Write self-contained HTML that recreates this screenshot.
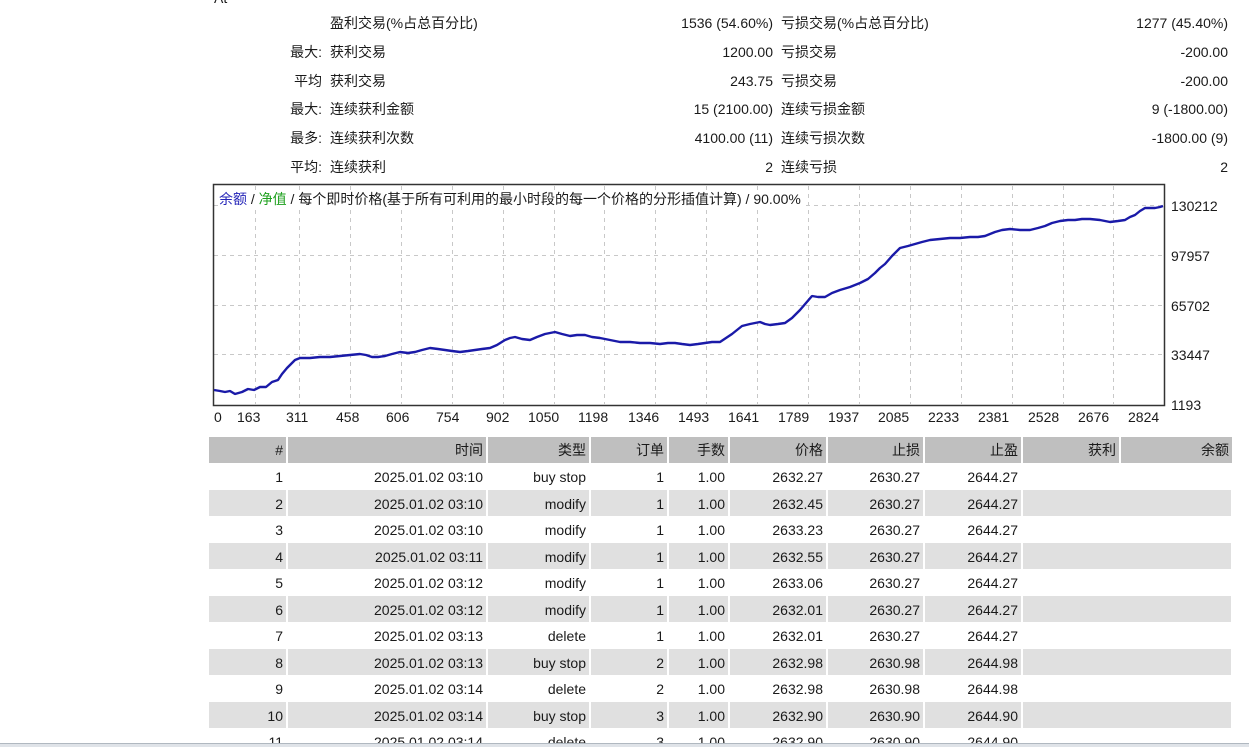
<!DOCTYPE html>
<html><head><meta charset="utf-8"><style>
body{margin:0;width:1249px;height:746px;background:#fff;overflow:hidden;position:relative;font-family:"Liberation Sans","Noto Sans CJK SC",sans-serif;font-size:14px;color:#1a1a1a}
.t{position:absolute;white-space:nowrap;line-height:16px}
.r{text-align:right}
table{position:absolute;left:209px;top:437px;border-collapse:collapse;font-size:14px}
td{height:26.5px;padding:2px 3px 0 0;text-align:right;border-right:2px solid #fff;box-sizing:border-box;white-space:nowrap}
tr.h td{background:#bfbfbf;height:26px;padding-top:0}
tr.g td{background:#e0e0e0}
</style></head><body>
<div class="t" style="left:214px;top:-10px">At</div>
<div class="t" style="left:330px;top:15px">盈利交易(%占总百分比)</div>
<div class="t r" style="left:560px;width:213px;top:15px">1536 (54.60%)</div>
<div class="t" style="left:781px;top:15px">亏损交易(%占总百分比)</div>
<div class="t r" style="left:1000px;width:228px;top:15px">1277 (45.40%)</div>

<div class="t r" style="left:220px;width:102px;top:44px">最大:</div>
<div class="t" style="left:330px;top:44px">获利交易</div>
<div class="t r" style="left:560px;width:213px;top:44px">1200.00</div>
<div class="t" style="left:781px;top:44px">亏损交易</div>
<div class="t r" style="left:1000px;width:228px;top:44px">-200.00</div>

<div class="t r" style="left:220px;width:102px;top:73px">平均</div>
<div class="t" style="left:330px;top:73px">获利交易</div>
<div class="t r" style="left:560px;width:213px;top:73px">243.75</div>
<div class="t" style="left:781px;top:73px">亏损交易</div>
<div class="t r" style="left:1000px;width:228px;top:73px">-200.00</div>

<div class="t r" style="left:220px;width:102px;top:101px">最大:</div>
<div class="t" style="left:330px;top:101px">连续获利金额</div>
<div class="t r" style="left:560px;width:213px;top:101px">15 (2100.00)</div>
<div class="t" style="left:781px;top:101px">连续亏损金额</div>
<div class="t r" style="left:1000px;width:228px;top:101px">9 (-1800.00)</div>

<div class="t r" style="left:220px;width:102px;top:130px">最多:</div>
<div class="t" style="left:330px;top:130px">连续获利次数</div>
<div class="t r" style="left:560px;width:213px;top:130px">4100.00 (11)</div>
<div class="t" style="left:781px;top:130px">连续亏损次数</div>
<div class="t r" style="left:1000px;width:228px;top:130px">-1800.00 (9)</div>

<div class="t r" style="left:220px;width:102px;top:159px">平均:</div>
<div class="t" style="left:330px;top:159px">连续获利</div>
<div class="t r" style="left:560px;width:213px;top:159px">2</div>
<div class="t" style="left:781px;top:159px">连续亏损</div>
<div class="t r" style="left:1000px;width:228px;top:159px">2</div>

<svg style="position:absolute;left:0;top:0" width="1249" height="746">
<g stroke="#c8c8c8" stroke-dasharray="4,4" stroke-width="1">
<line x1="214" y1="205.5" x2="1164" y2="205.5"/><line x1="214" y1="255.5" x2="1164" y2="255.5"/><line x1="214" y1="305.5" x2="1164" y2="305.5"/><line x1="214" y1="354.5" x2="1164" y2="354.5"/>
<line x1="255.5" y1="186" x2="255.5" y2="404"/>
<line x1="299.5" y1="186" x2="299.5" y2="404"/><line x1="350.5" y1="186" x2="350.5" y2="404"/><line x1="401.5" y1="186" x2="401.5" y2="404"/><line x1="452.5" y1="186" x2="452.5" y2="404"/><line x1="503.5" y1="186" x2="503.5" y2="404"/><line x1="554.5" y1="186" x2="554.5" y2="404"/><line x1="604.5" y1="186" x2="604.5" y2="404"/><line x1="655.5" y1="186" x2="655.5" y2="404"/><line x1="706.5" y1="186" x2="706.5" y2="404"/><line x1="757.5" y1="186" x2="757.5" y2="404"/><line x1="808.5" y1="186" x2="808.5" y2="404"/><line x1="859.5" y1="186" x2="859.5" y2="404"/><line x1="910.5" y1="186" x2="910.5" y2="404"/><line x1="961.5" y1="186" x2="961.5" y2="404"/><line x1="1012.5" y1="186" x2="1012.5" y2="404"/><line x1="1063.5" y1="186" x2="1063.5" y2="404"/><line x1="1113.5" y1="186" x2="1113.5" y2="404"/>
</g>
<rect x="213.5" y="184.5" width="951" height="221" fill="none" stroke="#333" stroke-width="1.5"/>
<polyline fill="none" stroke="#1a1aa8" stroke-width="2.4" stroke-linejoin="bevel" points="214,390 220,391 225,392 230,391 235,394 242,392 248,389 254,390 260,387 266,387 272,382 278,380 282,374 287,368 290,365 295,360 300,358 310,358 320,357 330,357 340,356 350,355 360,354 366,355 372,357 378,357 385,356 392,354 400,352 408,353 415,352 422,350 430,348 438,349 445,350 452,351 460,352 468,351 475,350 482,349 490,348 497,345 505,340 510,338 515,337 522,339 530,340 537,337 545,334 550,333 555,332 562,334 570,336 577,335 585,335 592,337 600,338 610,340 620,342 630,342 640,343 650,343 660,344 668,343 675,343 682,344 690,345 698,344 705,343 712,342 720,342 726,338 732,334 737,330 742,326 750,324 760,322 765,324 770,325 778,324 785,323 792,318 800,310 806,303 812,296 818,297 825,297 832,293 840,290 850,287 860,283 868,279 875,273 880,268 885,264 892,256 900,248 908,246 915,244 922,242 930,240 940,239 950,238 960,238 970,237 978,237 985,236 990,234 995,232 1002,230 1010,229 1020,230 1030,230 1038,228 1045,226 1052,223 1060,221 1068,220 1075,220 1082,219 1090,219 1100,220 1110,222 1118,221 1125,220 1130,217 1135,215 1140,211 1145,208 1150,208 1155,208 1160,207 1163,206"/>
</svg>
<div class="t" style="left:219px;top:191px;background:#fff;padding-right:2px"><span style="color:#2424b8">余额</span> / <span style="color:#1ea01e">净值</span> / 每个即时价格(基于所有可利用的最小时段的每一个价格的分形插值计算) / 90.00%</div>
<div class="t" style="left:1171px;top:198px">130212</div>
<div class="t" style="left:1171px;top:248px">97957</div>
<div class="t" style="left:1171px;top:298px">65702</div>
<div class="t" style="left:1171px;top:347px">33447</div>
<div class="t" style="left:1171px;top:397px">1193</div>
<div class="t" style="left:214px;top:409px">0</div>
<div class="t" style="left:237px;top:409px">163</div>
<div class="t" style="left:286px;top:409px">311</div>
<div class="t" style="left:336px;top:409px">458</div>
<div class="t" style="left:386px;top:409px">606</div>
<div class="t" style="left:436px;top:409px">754</div>
<div class="t" style="left:486px;top:409px">902</div>
<div class="t" style="left:528px;top:409px">1050</div>
<div class="t" style="left:578px;top:409px">1198</div>
<div class="t" style="left:628px;top:409px">1346</div>
<div class="t" style="left:678px;top:409px">1493</div>
<div class="t" style="left:728px;top:409px">1641</div>
<div class="t" style="left:778px;top:409px">1789</div>
<div class="t" style="left:828px;top:409px">1937</div>
<div class="t" style="left:878px;top:409px">2085</div>
<div class="t" style="left:928px;top:409px">2233</div>
<div class="t" style="left:978px;top:409px">2381</div>
<div class="t" style="left:1028px;top:409px">2528</div>
<div class="t" style="left:1078px;top:409px">2676</div>
<div class="t" style="left:1128px;top:409px">2824</div>

<table>
<colgroup><col style="width:78px"><col style="width:200px"><col style="width:103px"><col style="width:78px"><col style="width:61px"><col style="width:98px"><col style="width:97px"><col style="width:98px"><col style="width:98px"><col style="width:112px"></colgroup>
<tr class="h"><td>#</td><td>时间</td><td>类型</td><td>订单</td><td>手数</td><td>价格</td><td>止损</td><td>止盈</td><td>获利</td><td style="border-right:0">余额</td></tr>
<tr><td>1</td><td>2025.01.02 03:10</td><td>buy stop</td><td>1</td><td>1.00</td><td>2632.27</td><td>2630.27</td><td>2644.27</td><td colspan="2"></td></tr>
<tr class="g"><td>2</td><td>2025.01.02 03:10</td><td>modify</td><td>1</td><td>1.00</td><td>2632.45</td><td>2630.27</td><td>2644.27</td><td colspan="2"></td></tr>
<tr><td>3</td><td>2025.01.02 03:10</td><td>modify</td><td>1</td><td>1.00</td><td>2633.23</td><td>2630.27</td><td>2644.27</td><td colspan="2"></td></tr>
<tr class="g"><td>4</td><td>2025.01.02 03:11</td><td>modify</td><td>1</td><td>1.00</td><td>2632.55</td><td>2630.27</td><td>2644.27</td><td colspan="2"></td></tr>
<tr><td>5</td><td>2025.01.02 03:12</td><td>modify</td><td>1</td><td>1.00</td><td>2633.06</td><td>2630.27</td><td>2644.27</td><td colspan="2"></td></tr>
<tr class="g"><td>6</td><td>2025.01.02 03:12</td><td>modify</td><td>1</td><td>1.00</td><td>2632.01</td><td>2630.27</td><td>2644.27</td><td colspan="2"></td></tr>
<tr><td>7</td><td>2025.01.02 03:13</td><td>delete</td><td>1</td><td>1.00</td><td>2632.01</td><td>2630.27</td><td>2644.27</td><td colspan="2"></td></tr>
<tr class="g"><td>8</td><td>2025.01.02 03:13</td><td>buy stop</td><td>2</td><td>1.00</td><td>2632.98</td><td>2630.98</td><td>2644.98</td><td colspan="2"></td></tr>
<tr><td>9</td><td>2025.01.02 03:14</td><td>delete</td><td>2</td><td>1.00</td><td>2632.98</td><td>2630.98</td><td>2644.98</td><td colspan="2"></td></tr>
<tr class="g"><td>10</td><td>2025.01.02 03:14</td><td>buy stop</td><td>3</td><td>1.00</td><td>2632.90</td><td>2630.90</td><td>2644.90</td><td colspan="2"></td></tr>
<tr><td>11</td><td>2025.01.02 03:14</td><td>delete</td><td>3</td><td>1.00</td><td>2632.90</td><td>2630.90</td><td>2644.90</td><td colspan="2"></td></tr>
</table>
<div style="position:absolute;left:0;top:743px;width:1249px;height:3px;background:#dfe3e8;border-top:1px solid #b0b8c0"></div>
</body></html>
